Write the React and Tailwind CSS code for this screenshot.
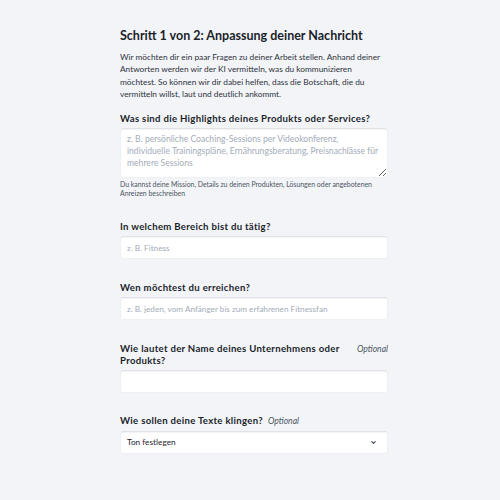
import { ChevronDown } from 'lucide-react';

const inputBase =
  'block w-full rounded-[3px] bg-white border border-[#eef0f3] border-t-[#dfe2e7] shadow-[inset_0_1px_1px_rgba(0,0,0,0.05)] px-[6px] text-[#374151] placeholder:text-[#a3acb9] outline-none';

function Label({ children, optional }) {
  return (
    <div className="mb-[3px] flex items-start justify-between gap-2">
      <label className="whitespace-nowrap text-[9.6px] font-bold leading-[12px] tracking-[0.3px] text-[#1a1f2b]">
        {children}
      </label>
      {optional && (
        <span className="shrink-0 text-[8.6px] italic leading-[12px] text-[#4b5563]">Optional</span>
      )}
    </div>
  );
}

export default function App() {
  return (
    <div className="min-h-[500px] w-full bg-[#f3f4f7] font-['Lato','Noto_Sans',sans-serif]">
      <div className="ml-[120px] w-[268px] pt-[27px]">
        <h1 className="text-[12.5px] font-bold leading-[17px] text-[#1a1f2b]">
          Schritt 1 von 2: Anpassung deiner Nachricht
        </h1>
        <p className="mt-[7px] text-[8.3px] leading-[12.3px] text-[#2d3340]">
          Wir möchten dir ein paar Fragen zu deiner Arbeit stellen. Anhand deiner Antworten werden wir der KI
          vermitteln, was du kommunizieren möchtest. So können wir dir dabei helfen, dass die Botschaft, die du
          vermitteln willst, laut und deutlich ankommt.
        </p>

        <div className="mt-[13px]">
          <Label>Was sind die Highlights deines Produkts oder Services?</Label>
          <textarea
            rows={3}
            className={`${inputBase} h-[50px] resize-y py-[4px] text-[8.6px] leading-[12px]`}
            placeholder="z. B. persönliche Coaching-Sessions per Videokonferenz, individuelle Trainingspläne, Ernährungsberatung, Preisnachlässe für mehrere Sessions"
          />
          <p className="mt-[2px] text-[6.9px] leading-[8.5px] text-[#4b5563]">
            Du kannst deine Mission, Details zu deinen Produkten, Lösungen oder angebotenen Anreizen beschreiben
          </p>
        </div>

        <div className="mt-[24px]">
          <Label>In welchem Bereich bist du tätig?</Label>
          <input className={`${inputBase} h-[23px] w-[265px] text-[8.2px]`} placeholder="z. B. Fitness" />
        </div>

        <div className="mt-[23px]">
          <Label>Wen möchtest du erreichen?</Label>
          <input
            className={`${inputBase} h-[23px] text-[8.2px]`}
            placeholder="z. B. jeden, vom Anfänger bis zum erfahrenen Fitnessfan"
          />
        </div>

        <div className="mt-[23px]">
          <Label optional>
            Wie lautet der Name deines Unternehmens oder
            <br />
            Produkts?
          </Label>
          <input className={`${inputBase} h-[23px] text-[8.2px]`} />
        </div>

        <div className="mt-[22px]">
          <div className="mb-[3px] flex items-baseline gap-[5px]">
            <span className="text-[9.6px] font-bold leading-[12px] tracking-[0.3px] text-[#1a1f2b]">
              Wie sollen deine Texte klingen?
            </span>
            <span className="text-[8.6px] italic text-[#4b5563]">Optional</span>
          </div>
          <div className={`${inputBase} flex h-[23px] items-center justify-between text-[8.3px]`}>
            <span className="text-[#1f2430]">Ton festlegen</span>
            <ChevronDown className="mr-[4px] h-[7px] w-[7px] text-[#374151]" strokeWidth={3.5} />
          </div>
        </div>
      </div>
    </div>
  );
}
